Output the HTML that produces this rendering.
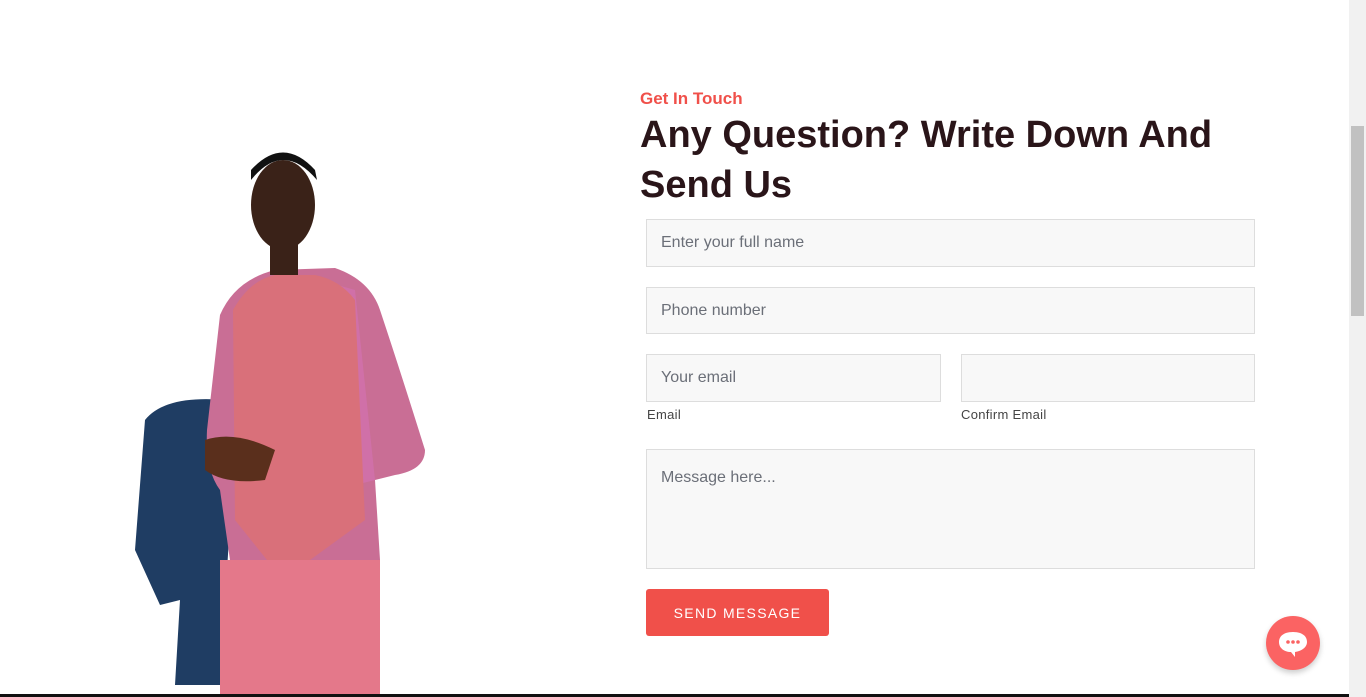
<!DOCTYPE html>
<html><head><style>
*{box-sizing:border-box;margin:0;padding:0}
body{width:1366px;height:697px;overflow:hidden;background:#fff;font-family:"Liberation Sans",sans-serif;position:relative}
.sb{position:absolute;left:1349px;top:0;width:17px;height:697px;background:#f1f1f1}
.thumb{position:absolute;left:1351px;top:126px;width:13px;height:190px;background:#c1c1c1}
.bot{position:absolute;left:0;top:694px;width:1349px;height:3px;background:#111}
.sub{position:absolute;left:640px;top:89px;color:#f0504a;font-weight:bold;font-size:17px}
h1{position:absolute;left:640px;top:110px;width:620px;color:#2a1519;font-size:38px;line-height:50px;font-weight:bold}
.in{position:absolute;background:#f8f8f8;border:1px solid #ddd;color:#6b6f78;font-size:16px;padding-left:14px;display:flex;align-items:center}
.lbl{position:absolute;font-size:13px;color:#444;letter-spacing:.3px}
.btn{position:absolute;left:646px;top:589px;width:183px;height:47px;background:#f0504a;border-radius:3px;color:#fff;font-size:14px;letter-spacing:1.3px;display:flex;align-items:center;justify-content:center}
.chat{position:absolute;left:1266px;top:616px;width:54px;height:54px;border-radius:50%;background:#fb6363;box-shadow:0 3px 6px rgba(0,0,0,.2)}
</style></head><body>
<svg style="position:absolute;left:125px;top:140px" width="320" height="556" viewBox="0 0 320 556">
<path d="M20 280 Q40 255 100 260 L110 300 L95 545 L50 545 L55 460 L35 465 L10 410 Z" fill="#1f3d63"/>
<path d="M95 175 Q110 140 150 130 L210 128 Q245 140 255 170 Q275 230 300 310 Q300 330 270 335 L250 340 L255 420 L255 556 L95 556 L105 420 L95 350 Q80 330 82 290 Z" fill="#c96e95"/>
<path d="M110 170 L150 140 L150 280 L110 290 Z M195 140 L230 150 L250 340 L210 350 Z" fill="#d070a8"/>
<path d="M108 170 Q125 140 150 135 L190 135 Q215 140 230 160 L240 380 L185 420 L150 430 L110 380 Z" fill="#d9707a"/>
<rect x="95" y="420" width="160" height="136" fill="#e4788a"/>
<ellipse cx="158" cy="65" rx="32" ry="45" fill="#3a2218"/>
<path d="M126 40 Q158 0 192 40 L190 30 Q158 -5 126 30Z" fill="#111"/>
<rect x="145" y="100" width="28" height="35" fill="#3a2218"/>
<path d="M80 300 Q110 290 150 310 L140 340 Q100 345 80 330Z" fill="#5a2f1c"/>
</svg>
<div class="sub">Get In Touch</div>
<h1>Any Question? Write Down And Send Us</h1>
<div class="in" style="left:646px;top:219px;width:609px;height:48px">Enter your full name</div>
<div class="in" style="left:646px;top:287px;width:609px;height:47px">Phone number</div>
<div class="in" style="left:646px;top:354px;width:295px;height:48px">Your email</div>
<div class="in" style="left:961px;top:354px;width:294px;height:48px"></div>
<div class="lbl" style="left:647px;top:407px">Email</div>
<div class="lbl" style="left:961px;top:407px">Confirm Email</div>
<div class="in" style="left:646px;top:449px;width:609px;height:120px;align-items:flex-start;padding-top:19px">Message here...</div>
<div class="btn">SEND MESSAGE</div>
<div class="chat"><svg width="54" height="54" viewBox="0 0 54 54"><path d="M27 16c-9 0-14 4-14 10s5 10 12 10l4 5 0-5c7-1 12-5 12-10 0-6-5-10-14-10z" fill="#fff"/><circle cx="22" cy="26" r="1.8" fill="#fb6363"/><circle cx="27" cy="26" r="1.8" fill="#fb6363"/><circle cx="32" cy="26" r="1.8" fill="#fb6363"/></svg></div>
<div class="sb"></div><div class="thumb"></div>
<div class="bot"></div>
</body></html>
